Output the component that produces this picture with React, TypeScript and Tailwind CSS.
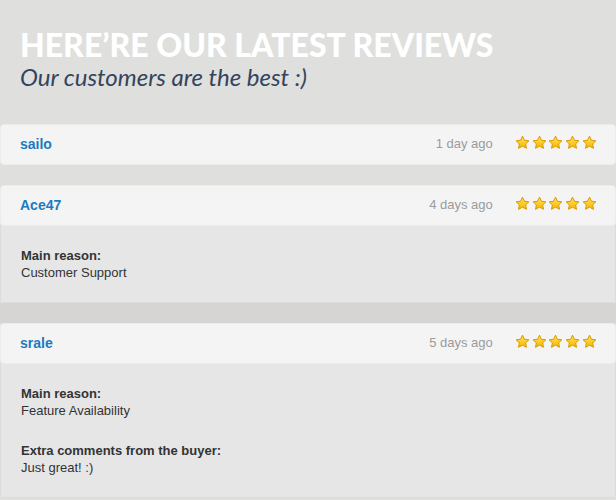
import React from "react";

type Review = {
  name: string;
  when: string;
  reason?: string;
  comments?: string;
};

const reviews: Review[] = [
  { name: "sailo", when: "1 day ago" },
  { name: "Ace47", when: "4 days ago", reason: "Customer Support" },
  { name: "srale", when: "5 days ago", reason: "Feature Availability", comments: "Just great! :)" },
];

function Star() {
  return (
    <svg width="15" height="15" viewBox="0 0 24 24" className="block">
      <defs>
        <linearGradient id="starFill" x1="0" y1="0" x2="0" y2="1">
          <stop offset="0%" stopColor="#ffe45c" />
          <stop offset="100%" stopColor="#f6b600" />
        </linearGradient>
      </defs>
      <path
        d="M12 1.8l3.1 6.6 7.1.9-5.2 4.9 1.4 7.1L12 17.8l-6.4 3.5 1.4-7.1-5.2-4.9 7.1-.9z"
        fill="url(#starFill)"
        stroke="#d99a00"
        strokeWidth="1.6"
        strokeLinejoin="round"
      />
    </svg>
  );
}

function ReviewCard({ review }: { review: Review }) {
  return (
    <div>
      <div className="h-[41px] bg-[#f4f4f4] rounded-[4px] border border-[#ececec] flex items-center pl-[19px] pr-[18px]">
        <span className="text-[14px] font-bold text-[#1c7bbf] flex-1">{review.name}</span>
        <span className="text-[13px] text-[#9b9b9b] mr-[22px] -mt-[2px]">{review.when}</span>
        <div className="flex gap-[1.8px] -mt-[5px]">
          {[0, 1, 2, 3, 4].map((i) => (
            <Star key={i} />
          ))}
        </div>
      </div>
      {review.reason && (
        <div className="bg-[#e6e6e6] border-x border-b border-[#dcdcdc] pl-[20px] py-[21px] text-[13px] leading-[17px] text-[#333]">
          <div className="font-bold">Main reason:</div>
          <div>{review.reason}</div>
          {review.comments && (
            <>
              <div className="font-bold mt-[23px]">Extra comments from the buyer:</div>
              <div>{review.comments}</div>
            </>
          )}
        </div>
      )}
    </div>
  );
}

export default function App() {
  return (
    <main className="w-[616px] h-[500px] bg-[#dfdfdd] overflow-hidden" style={{ fontFamily: '"Liberation Sans", Arial, sans-serif' }}>
      <header className="pt-[27px] pl-[20px] h-[124px]" style={{ fontFamily: "Lato, sans-serif" }}>
        <h1 className="text-[32px] leading-[36px] font-black text-white">HERE’RE OUR LATEST REVIEWS</h1>
        <p className="text-[24px] leading-[28px] italic text-[#34445c]">Our customers are the best :)</p>
      </header>
      <ReviewCard review={reviews[0]} />
      <div className="h-[20px]" />
      <ReviewCard review={reviews[1]} />
      <div className="h-[20px] bg-[#d6d5d3]" />
      <ReviewCard review={reviews[2]} />
    </main>
  );
}
